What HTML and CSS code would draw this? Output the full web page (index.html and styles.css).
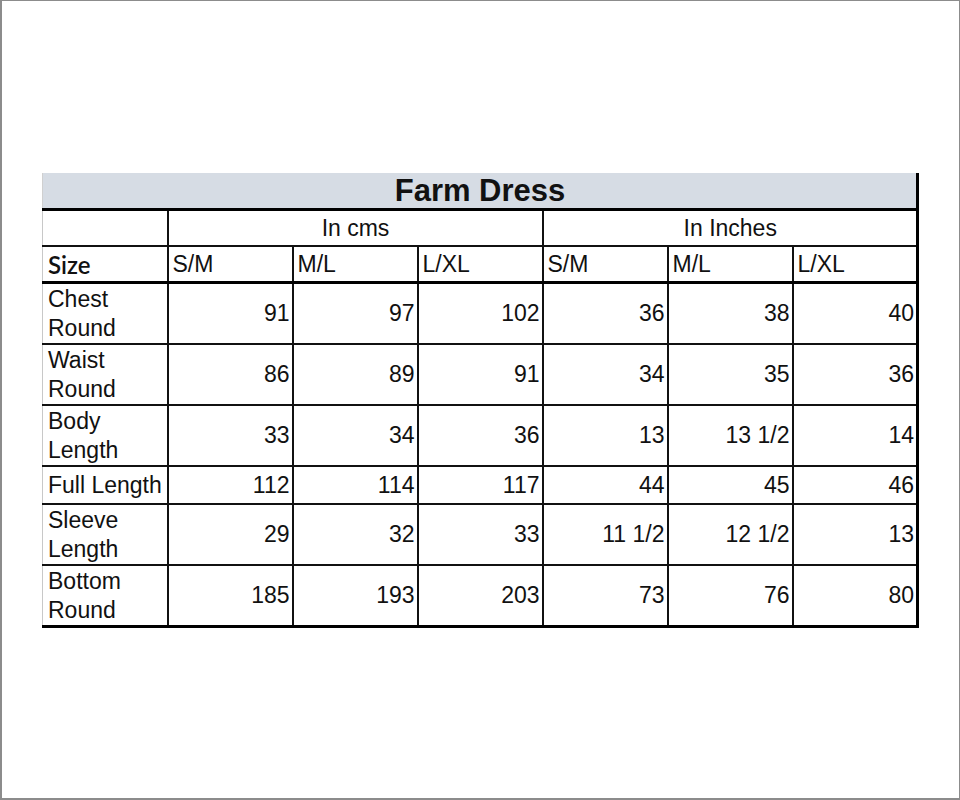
FILE: index.html
```html
<!DOCTYPE html>
<html>
<head>
<meta charset="utf-8">
<link rel="stylesheet" href="styles.css">
</head>
<body>
<div class="frame">
  <table class="chart">
    <colgroup>
      <col class="c"><col class="c"><col class="c"><col class="c"><col class="c"><col class="c"><col class="c">
    </colgroup>
    <tr class="title-row"><td colspan="7" class="title">Farm Dress</td></tr>
    <tr class="unit-row"><td class="blank"></td><td colspan="3" class="unit">In cms</td><td colspan="3" class="unit">In Inches</td></tr>
    <tr class="size-row"><td class="label size">Size</td><td class="hd">S/M</td><td class="hd">M/L</td><td class="hd">L/XL</td><td class="hd">S/M</td><td class="hd">M/L</td><td class="hd last">L/XL</td></tr>
    <tr class="tall first"><td class="label">Chest<br>Round</td><td class="n">91</td><td class="n">97</td><td class="n">102</td><td class="n">36</td><td class="n">38</td><td class="n last">40</td></tr>
    <tr class="tall"><td class="label">Waist<br>Round</td><td class="n">86</td><td class="n">89</td><td class="n">91</td><td class="n">34</td><td class="n">35</td><td class="n last">36</td></tr>
    <tr class="tall"><td class="label">Body<br>Length</td><td class="n">33</td><td class="n">34</td><td class="n">36</td><td class="n">13</td><td class="n">13 1/2</td><td class="n last">14</td></tr>
    <tr class="short"><td class="label">Full Length</td><td class="n">112</td><td class="n">114</td><td class="n">117</td><td class="n">44</td><td class="n">45</td><td class="n last">46</td></tr>
    <tr class="tall"><td class="label">Sleeve<br>Length</td><td class="n">29</td><td class="n">32</td><td class="n">33</td><td class="n">11 1/2</td><td class="n">12 1/2</td><td class="n last">13</td></tr>
    <tr class="tall bottom"><td class="label">Bottom<br>Round</td><td class="n">185</td><td class="n">193</td><td class="n">203</td><td class="n">73</td><td class="n">76</td><td class="n last">80</td></tr>
  </table>
</div>
</body>
</html>
```

FILE: styles.css
```css
html, body {
  margin: 0;
  padding: 0;
  background: #ffffff;
}
.frame {
  box-sizing: border-box;
  width: 960px;
  height: 800px;
  border: 1px solid #8c8c8c;
  border-left: 2px solid #8c8c8c;
  border-bottom: 2px solid #8c8c8c;
  padding: 172px 0 0 40px;
  background: #ffffff;
}
.chart {
  border-collapse: collapse;
  table-layout: fixed;
  width: 877px;
  font-family: "Liberation Sans", Arial, sans-serif;
  font-size: 23px;
  color: #111111;
}
.chart col.c {
  width: 125px;
}
.chart td {
  border: 2px solid #111111;
  padding: 0 3px 0 4px;
  line-height: 29px;
  vertical-align: middle;
  white-space: nowrap;
  overflow: visible;
}
.chart td.last {
  border-right: 3px solid #000000;
}
.title-row td.title {
  height: 34px;
  background: #d6dce4;
  text-align: center;
  font-weight: bold;
  font-size: 31px;
  line-height: 34px;
  padding-top: 1px;
  border-top: none;
  border-left: 1px solid #d0d0d0;
  border-right: 3px solid #000000;
  border-bottom: 3px solid #000000;
}
.unit-row td {
  height: 34px;
  text-align: center;
}
.unit-row td.unit:last-child {
  border-right: 3px solid #000000;
}
.chart td.blank,
.chart td.label {
  border-left: 1px solid #c8c8c8;
}
.size-row td {
  height: 34px;
  border-bottom: 3px solid #000000;
  text-align: left;
}
.size-row td.size {
  font-family: Lato, "Open Sans", sans-serif;
  font-size: 24px;
  font-weight: 600;
}
.tall td {
  height: 59px;
}
.short td {
  height: 36px;
}
.chart td.label {
  text-align: left;
  padding-left: 5px;
}
.chart td.n {
  text-align: right;
  padding-right: 2px;
}
.bottom td {
  border-bottom: 3px solid #000000;
}
```
